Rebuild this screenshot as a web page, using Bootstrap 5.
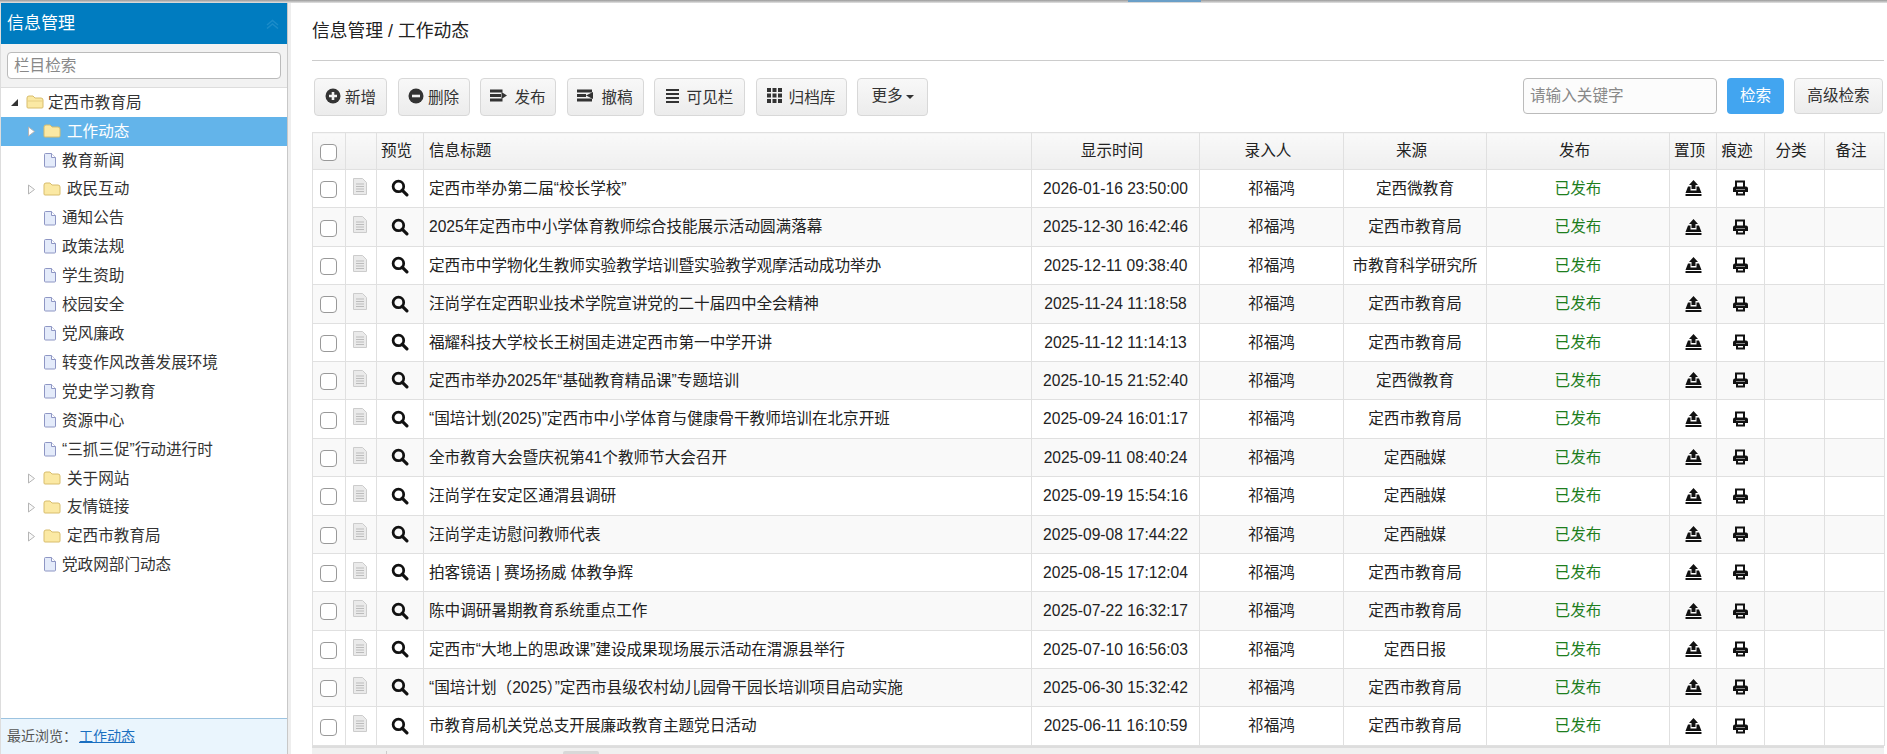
<!doctype html>
<html lang="zh"><head><meta charset="utf-8">
<link href="https://cdn.jsdelivr.net/npm/bootstrap@5.3.0/dist/css/bootstrap.min.css" rel="stylesheet">
<style>
html,body{height:100%}
body{font-family:"Liberation Sans","Noto Sans CJK SC",sans-serif;font-size:15.6px;color:#222;background:#fff;overflow:hidden}
.topline{height:3px;background:linear-gradient(#9a9a9a,#e4e4e4);position:relative;flex:none}
.toptab{position:absolute;left:1128px;top:0;width:73px;height:2px;background:#6a9fc8}
.shell{height:751px}
.side{width:288px;flex:none;border-right:1px solid #c8c8c8;border-left:1px solid #ddd}
.side-h{height:41px;background:#007cc0;color:#fff;font-size:17px;padding-left:6px}
.side-s{height:44px;background:#f2f2f2;border-bottom:1px solid #ddd;padding:8px 6px}
.side-s input{height:27px;border-radius:4px;font-size:15.6px;padding:0 6px;border-color:#bbb}
.side-s input::placeholder,.kw::placeholder{color:#888}
.tree{list-style:none;margin:0;padding:0}
.tree li{height:28.92px;white-space:nowrap;color:#333}
.tree li.sel{background:#63b4ea;color:#fff}
.arrow{width:16px;flex:none;display:inline-flex;justify-content:center}
.lv0{padding-left:5px}.lv1{padding-left:22px}
.lv0 .txt{margin-left:4px}
.lv1 .txt{margin-left:6px}
.lv1.doc .txt{margin-left:5px}
.recent{height:36px;background:#eaf5fd;border-top:1px solid #9cc3e0;padding-left:6px;font-size:14px;color:#555}
.recent a{color:#1a6fc0;margin-left:2px}
.gutter{width:3px;flex:none;background:#eee}
.main{min-width:0;padding:0 3px 0 21px}
.crumb{height:58px;font-size:17.8px;color:#222;border-bottom:1px solid #ccc;padding-bottom:1px}
.bar{height:71px;padding:17px 0 0 2px}
.tb{height:38px;padding:0;background:linear-gradient(#f8f8f8,#ececec);border:1px solid #d8d8d8;border-radius:4px;color:#333;font-size:15.6px;white-space:nowrap}
.tb:hover{background:#eee}
.tb svg{flex:none;margin-top:-3px}
.tools-row{gap:10.5px}
.tools-row .tb{justify-content:center}
.tools-row .tb:nth-child(1){width:73px;gap:4px}
.tools-row .tb:nth-child(2){width:72px;gap:4px}
.tools-row .tb:nth-child(3){width:76px;gap:7px}
.tools-row .tb:nth-child(4){width:77px;gap:7px}
.tools-row .tb:nth-child(5){width:91px;gap:8px}
.tools-row .tb:nth-child(6){width:91px;gap:7px}
.tools-row .tb:nth-child(7){width:71px;gap:3px;padding-bottom:3px}
.tools-row .dropdown-toggle::after{margin-left:0;border-top-width:.3em;border-left-width:.3em;border-right-width:.3em;margin-top:3px}
.tools-row .lbl{padding-top:2px}
.kw{width:194px;height:36px;border:1px solid #bbb;border-radius:4px;padding:0 6px;font-size:15.6px;background:#fcfcfc}
.sb{height:36px;width:57px;background:#42a5f0;color:#fff;border:0;border-radius:4px;font-size:15.6px}
.tb2{height:36px;width:89px;padding:0}
.search-row{gap:10px;padding-right:1px}
.grid-t{table-layout:fixed;width:1572px;margin:0;border-color:#e0e0e0;font-size:15.6px;color:#222}
.grid-t th,.grid-t td{height:38.4px;padding:0 5px;vertical-align:middle;border:1px solid #e0e0e0;white-space:nowrap;overflow:hidden}
.grid-t th{height:37px;font-weight:400;background:linear-gradient(#f9f9f9,#efefef)}
.grid-t th.cc{padding:0 7px 0 0}
.grid-t tbody tr:nth-child(even) td{background:#f9f9f9}
.grid-t .form-check-input{width:17px;height:17px;margin:2px 0 0 0;border-color:#999;border-radius:4px;float:none;display:block}
.pub{color:#1e7e1e}
.cc{text-align:center}
.ci{padding-left:7px!important;padding-right:0!important}
.grid-t td.fi{padding:0 3px 7px 0}
.grid-t td.ico{padding-bottom:3px}
.hscroll{height:8px;background:#f0f0f0;width:1572px;position:relative;border-top:2px solid #ddd}
.thumb{position:absolute;left:251px;top:3px;width:36px;height:3px;background:#d8d8d8;border-radius:2px 2px 0 0}
.tick{position:absolute;left:74px;top:3px;width:1px;height:3px;background:#ccc}
</style></head>
<body>
<div class="topline"><div class="toptab"></div></div>
<div class="shell d-flex">
  <aside class="side d-flex flex-column">
    <div class="side-h d-flex align-items-center justify-content-between">
      <span>信息管理</span>
      <svg class="me-2" width="13" height="10" viewBox="0 0 13 10"><path d="M1 6l5.500-4.500L12 6M1 9.500L6.500 5 12 9.500" fill="none" stroke="#1b8cc9" stroke-width="1.500"/></svg>
    </div>
    <div class="side-s"><input class="form-control" placeholder="栏目检索"></div>
    <ul class="tree flex-grow-1" id="tree"></ul>
    <div class="recent d-flex align-items-center">最近浏览：<a href="#">工作动态</a></div>
  </aside>
  <div class="gutter"></div>
  <main class="main flex-grow-1 d-flex flex-column">
    <div class="crumb d-flex align-items-center">信息管理 / 工作动态</div>
    <div class="bar d-flex justify-content-between align-items-start">
      <div class="d-flex tools-row" id="tools"></div>
      <div class="d-flex search-row">
        <input class="kw" placeholder="请输入关键字">
        <button class="sb">检索</button>
        <button class="tb tb2">高级检索</button>
      </div>
    </div>
    <table class="table grid-t">
      <colgroup><col style="width:33px"><col style="width:31px"><col style="width:47px"><col style="width:608px"><col style="width:168px"><col style="width:144px"><col style="width:143px"><col style="width:183px"><col style="width:47px"><col style="width:48px"><col style="width:60px"><col style="width:60px"></colgroup>
      <thead><tr><th class="ci"><input class="form-check-input" type="checkbox"></th><th></th><th class="cc">预览</th><th>信息标题</th><th class="cc">显示时间</th><th class="cc">录入人</th><th class="cc">来源</th><th class="cc">发布</th><th class="cc">置顶</th><th class="cc">痕迹</th><th class="cc">分类</th><th class="cc">备注</th></tr></thead>
      <tbody id="rows"></tbody>
    </table>
    <div class="hscroll"><div class="tick"></div><div class="thumb"></div></div>
  </main>
</div>
<script>
const folder=(open)=>`<svg width="18" height="14" viewBox="0 0 18 14"><path d="M1 3q0-2 2-2h4l2 2h6q2 0 2 2v7q0 1-1 1H2q-1 0-1-1z" fill="#fbe9a4" stroke="#d8bd6c"/>${open?'<path d="M1 6h16" stroke="#e6cf84"/>':''}</svg>`;
const doc=`<svg width="14" height="15" viewBox="0 0 14 15"><path d="M1.500 1.500q0-1 1-1h6l4 4v8.500q0 1-1 1h-9q-1 0-1-1z" fill="#e4ebfa" stroke="#8e96c4"/><path d="M8.500 .5v4h4" fill="#fff" stroke="#8e96c4"/></svg>`;
const tri=(c)=>`<svg width="9" height="11" viewBox="0 0 9 11"><path d="M1.500 1l6 4.500-6 4.500z" fill="${c}" stroke="#b5b5b5"/></svg>`;
const down=`<svg width="9" height="9" viewBox="0 0 9 9"><path d="M8 1v7H1z" fill="#333"/></svg>`;
const tree=[["定西市教育局",0,"o"],["工作动态",1,"f","sel"],["教育新闻",1,"d"],["政民互动",1,"f"],["通知公告",1,"d"],["政策法规",1,"d"],["学生资助",1,"d"],["校园安全",1,"d"],["党风廉政",1,"d"],["转变作风改善发展环境",1,"d"],["党史学习教育",1,"d"],["资源中心",1,"d"],["“三抓三促”行动进行时",1,"d"],["关于网站",1,"f"],["友情链接",1,"f"],["定西市教育局",1,"f"],["党政网部门动态",1,"d"]];
document.getElementById('tree').innerHTML=tree.map(([t,l,k,s])=>`<li class="d-flex align-items-center lv${l} ${k=='d'?'doc':''} ${s||''}"><span class="arrow">${k=='o'?down:k=='f'?tri(s?'#fff':'#fafafa'):''}</span>${k=='d'?'<span class="d-inline-flex ms-1">'+doc+'</span>':'<span class="d-inline-flex ms-1">'+folder(k=='o')+'</span>'}<span class="txt">${t}</span></li>`).join('');
const ic={
plus:`<svg width="16" height="16" viewBox="0 0 16 16"><circle cx="8" cy="8" r="7.500" fill="#333"/><path d="M8 4v8M4 8h8" stroke="#f2f2f2" stroke-width="2.600"/></svg>`,
minus:`<svg width="16" height="16" viewBox="0 0 16 16"><circle cx="8" cy="8" r="7.500" fill="#333"/><path d="M4 8h8" stroke="#f2f2f2" stroke-width="2.600"/></svg>`,
pub:`<svg width="17" height="13" viewBox="0 0 17 13"><path d="M0 .5h12.500v3H0zM0 9.500h12.500v3H0zM0 5h11v3H0z" fill="#333"/><path d="M11.500 3l5.500 3.500-5.500 3.500z" fill="#333"/></svg>`,
rev:`<svg width="17" height="13" viewBox="0 0 17 13"><path d="M0 .5h15v3H0zM0 9.500h15v3H0zM0 5h9v3H0z" fill="#333"/><path d="M16 3l-7 3.500 7 3.500z" fill="#333"/></svg>`,
list:`<svg width="13" height="16" viewBox="0 0 13 16"><path d="M0 1h13v2H0zM0 5h13v2H0zM0 9h13v2H0zM0 13h13v2H0z" fill="#333"/></svg>`,
grid:`<svg width="15" height="15" viewBox="0 0 15 15"><path d="M0 0h4v4H0zM5.500 0h4v4h-4zM11 0h4v4h-4zM0 5.500h4v4H0zM5.500 5.500h4v4h-4zM11 5.500h4v4h-4zM0 11h4v4H0zM5.500 11h4v4h-4zM11 11h4v4h-4z" fill="#333"/></svg>`};
const tools=[["plus","新增"],["minus","删除"],["pub","发布"],["rev","撤稿"],["list","可见栏"],["grid","归档库"]];
document.getElementById('tools').innerHTML=tools.map(([i,t])=>`<button class="tb d-flex align-items-center">${ic[i]}<span class="lbl">${t}</span></button>`).join('')+`<button class="tb d-flex align-items-center dropdown-toggle">更多</button>`;
const search=`<svg width="18" height="18" viewBox="0 0 17 17"><circle cx="7" cy="7" r="5" fill="none" stroke="#111" stroke-width="2.600"/><path d="M10.500 10.500l4.500 4.500" stroke="#111" stroke-width="3" stroke-linecap="round"/></svg>`;
const file=`<svg width="14" height="17" viewBox="0 0 14 17"><path d="M.5.5h9l4 4v12H.5z" fill="#eaeaea" stroke="#ccc"/><path d="M3 6h8M3 8.500h8M3 11h8M3 13.500h8" stroke="#bcbcbc"/></svg>`;
const up=`<svg width="19" height="16" viewBox="0 0 18 16"><path d="M9 0l4.500 5h-2.500v4h-4V5H4.500z" fill="#111"/><path d="M3.500 6.500h2.500v4h6v-4h2.500l2.500 6.500H1z" fill="#111"/><path d="M1 14h16v2H1z" fill="#111"/></svg>`;
const print=`<svg width="17" height="16" viewBox="0 0 17 16"><path d="M4 7V1.500h8V7" fill="none" stroke="#111" stroke-width="2"/><path d="M1 8.500q0-2 2-2h11q2 0 2 2V12h-3V9.500H4V12H1z" fill="#111"/><path d="M5 11h7v3.500H5z" fill="none" stroke="#111" stroke-width="2"/></svg>`;
const data=[["定西市举办第二届“校长学校”","2026-01-16 23:50:00","定西微教育"],["2025年定西市中小学体育教师综合技能展示活动圆满落幕","2025-12-30 16:42:46","定西市教育局"],["定西市中学物化生教师实验教学培训暨实验教学观摩活动成功举办","2025-12-11 09:38:40","市教育科学研究所"],["汪尚学在定西职业技术学院宣讲党的二十届四中全会精神","2025-11-24 11:18:58","定西市教育局"],["福耀科技大学校长王树国走进定西市第一中学开讲","2025-11-12 11:14:13","定西市教育局"],["定西市举办2025年“基础教育精品课”专题培训","2025-10-15 21:52:40","定西微教育"],["“国培计划(2025)”定西市中小学体育与健康骨干教师培训在北京开班","2025-09-24 16:01:17","定西市教育局"],["全市教育大会暨庆祝第41个教师节大会召开","2025-09-11 08:40:24","定西融媒"],["汪尚学在安定区通渭县调研","2025-09-19 15:54:16","定西融媒"],["汪尚学走访慰问教师代表","2025-09-08 17:44:22","定西融媒"],["拍客镜语 | 赛场扬威 体教争辉","2025-08-15 17:12:04","定西市教育局"],["陈中调研暑期教育系统重点工作","2025-07-22 16:32:17","定西市教育局"],["定西市“大地上的思政课”建设成果现场展示活动在渭源县举行","2025-07-10 16:56:03","定西日报"],["“国培计划（2025）”定西市县级农村幼儿园骨干园长培训项目启动实施","2025-06-30 15:32:42","定西市教育局"],["市教育局机关党总支开展廉政教育主题党日活动","2025-06-11 16:10:59","定西市教育局"]];
document.getElementById('rows').innerHTML=data.map(([t,d,s])=>`<tr><td class="ci"><input class="form-check-input" type="checkbox"></td><td class="cc fi">${file}</td><td class="cc ico">${search}</td><td>${t}</td><td class="cc">${d}</td><td class="cc">祁福鸿</td><td class="cc">${s}</td><td class="cc pub">已发布</td><td class="cc ico">${up}</td><td class="cc ico">${print}</td><td></td><td></td></tr>`).join('');
</script>
<script src="https://cdn.jsdelivr.net/npm/bootstrap@5.3.0/dist/js/bootstrap.bundle.min.js"></script>
</body></html>
